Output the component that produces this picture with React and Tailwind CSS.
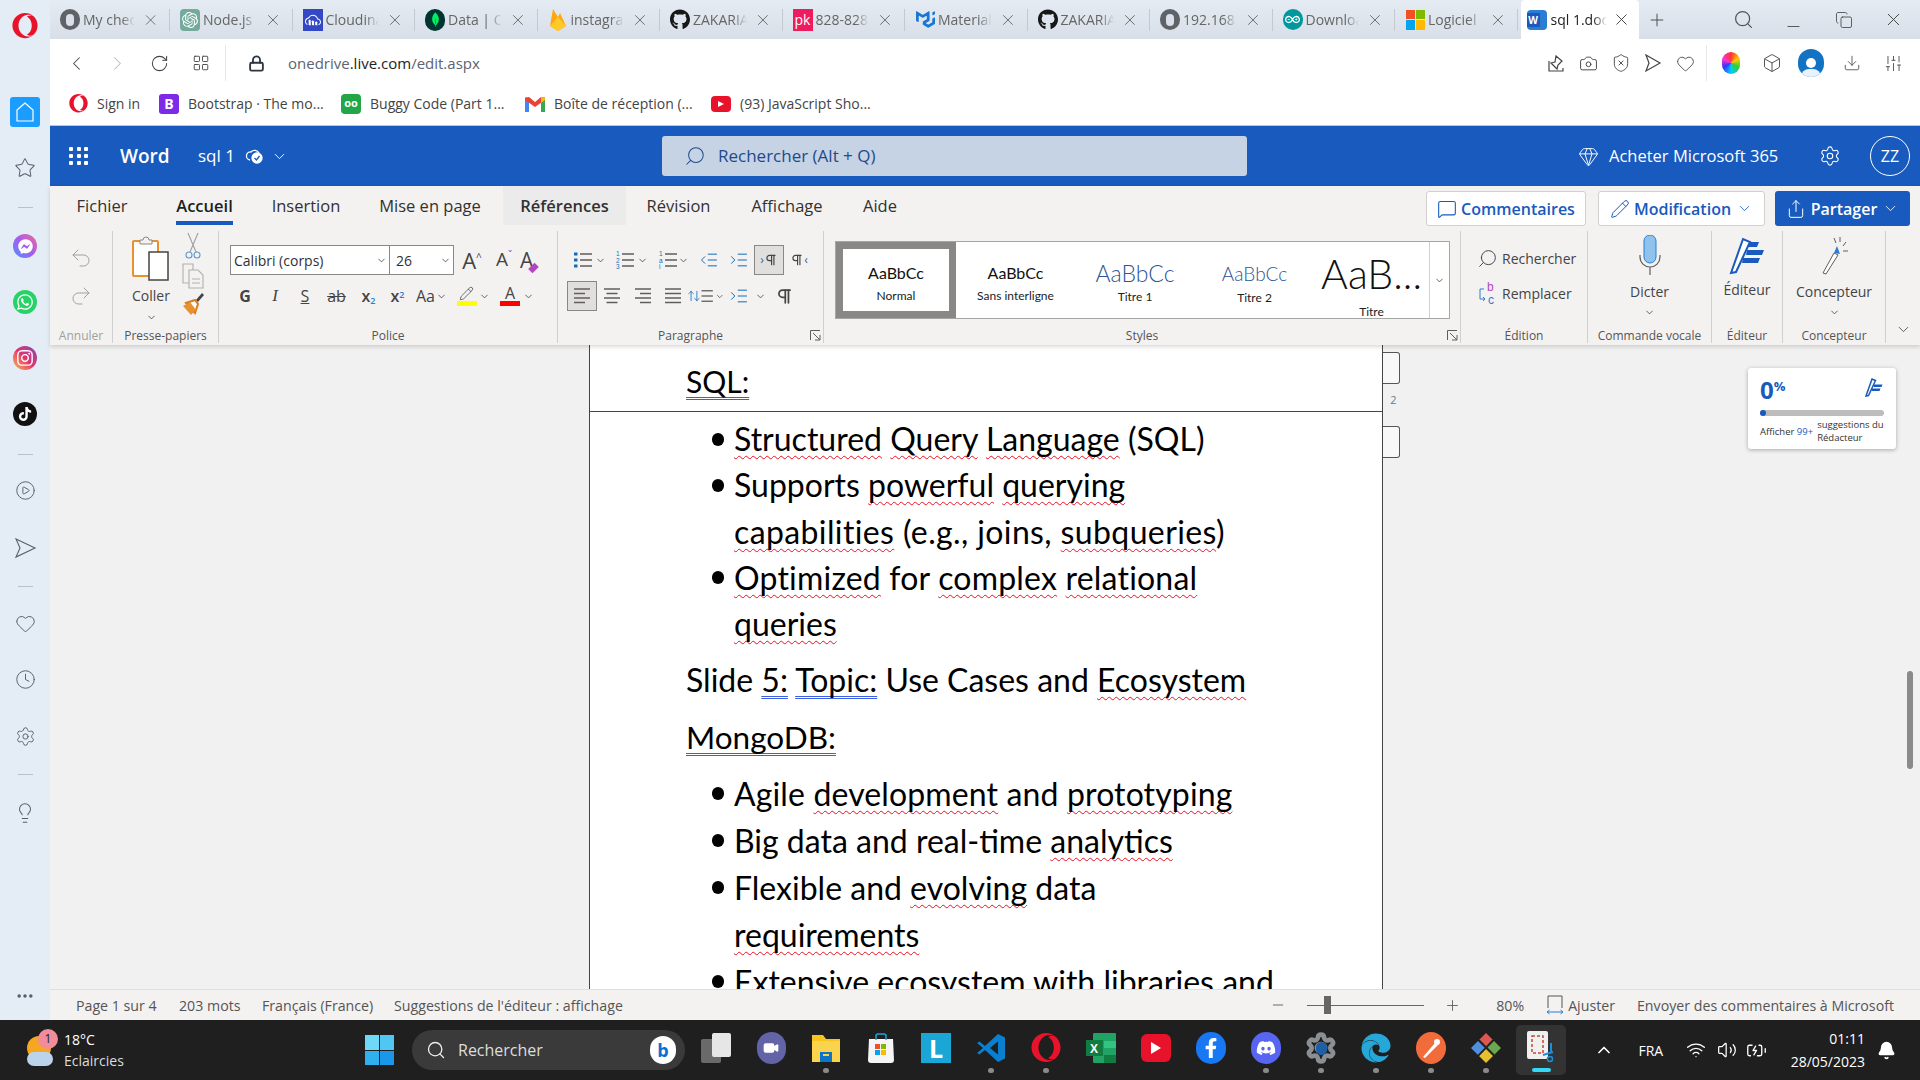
import {
  Bell, BatteryCharging, Box, Camera, ChevronDown, ChevronLeft, ChevronRight, ChevronUp, CirclePlay, Clock,
  Download, Ellipsis, Gem, Heart, IndentDecrease, IndentIncrease, Lightbulb, Lock, MessageSquare, Minus,
  Pencil, Pilcrow, Plus, Redo2, RotateCw, Search, Settings, Share, ShieldX, SlidersHorizontal, Star, Undo2,
  Video, Volume2, Wifi, X, LayoutGrid, ArrowUpDown, Copy as Restore,
} from "lucide-react";
import { FaDiscord, FaEdge, FaFacebookF, FaFacebookMessenger, FaGithub, FaInstagram, FaOpera, FaTiktok, FaWhatsapp } from "react-icons/fa";
import { SiArduino, SiCloudinary, SiMongodb, SiMui, SiOpenai } from "react-icons/si";

const Globe = () => (
  <span className="w-[20px] h-[21px] rounded-full bg-[#5f6368] flex items-center justify-center">
    <span className="w-[8px] h-[12px] rounded-full bg-[#d9e0e9]" />
  </span>
);

const Flame = () => (
  <svg width="18" height="24" viewBox="0 0 18 24"><path d="M1 18 4 1l5 8 2-4 6 13-8 5z" fill="#ffa611" /><path d="M1 18 9 9l8 9-8 5z" fill="#ffca28" /></svg>
);

const tabs = [
  { icon: <Globe />, title: "My check" },
  { icon: <span className="w-[20px] h-[22px] rounded-sm bg-[#74aa9c] flex items-center justify-center"><SiOpenai size={16} className="text-white" /></span>, title: "Node.js" },
  { icon: <span className="w-[20px] h-[22px] bg-[#3448c5] flex items-center justify-center"><SiCloudinary size={16} className="text-white" /></span>, title: "Cloudinary" },
  { icon: <span className="w-[20px] h-[22px] rounded-full bg-[#023430] flex items-center justify-center"><SiMongodb size={15} className="text-[#00ed64]" /></span>, title: "Data | Cl" },
  { icon: <Flame />, title: "instagram" },
  { icon: <FaGithub size={21} className="text-[#181717]" />, title: "ZAKARIA" },
  { icon: <span className="w-[20px] h-[22px] bg-[#ee1c5e] text-white text-[14px] leading-[22px] text-center">pk</span>, title: "828-828" },
  { icon: <SiMui size={19} className="text-[#1976d2]" />, title: "Material" },
  { icon: <FaGithub size={21} className="text-[#181717]" />, title: "ZAKARIA" },
  { icon: <Globe />, title: "192.168." },
  { icon: <span className="w-[20px] h-[21px] rounded-full bg-[#00979d] flex items-center justify-center"><SiArduino size={15} className="text-white" /></span>, title: "Download" },
  { icon: <MsLogo />, title: "Logiciel" },
];

function MsLogo() {
  return (
    <span className="w-[19px] h-[20px] grid grid-cols-2 gap-px">
      <span className="bg-[#f25022]" /><span className="bg-[#7fba00]" />
      <span className="bg-[#00a4ef]" /><span className="bg-[#ffb900]" />
    </span>
  );
}

function WordIcon() {
  return (
    <span className="w-[20px] h-[20px] bg-[#2b7cd3] flex items-center rounded-sm">
      <span className="w-[13px] h-[14px] bg-[#185abd] text-white text-[10px] font-bold leading-[14px] text-center">W</span>
    </span>
  );
}

function Tab({ icon, title, wide }) {
  return (
    <div className={`${wide ? "w-[120px]" : "w-[122.5px]"} h-[39px] flex items-center pl-[10px] shrink-0`}>
      <span className="w-[20px] flex items-center justify-center shrink-0">{icon}</span>
      <span className="w-[54px] ml-[3px] overflow-hidden whitespace-nowrap text-[14px] text-[#666] [mask-image:linear-gradient(90deg,#000_75%,transparent)]">{title}</span>
      <X size={18} strokeWidth={1.1} className="ml-[7px] text-[#555]" />
      <span className="ml-[10px] w-px h-[22px] bg-[#c3c9d1]" />
    </div>
  );
}

function TopStrip() {
  return (
    <div className="h-[39px] flex items-center bg-linear-to-b from-[#e4ebf3] to-[#d8dfe8]">
      {tabs.map((t, i) => <Tab key={i} icon={t.icon} title={t.title} wide={i === 0} />)}
      <div className="w-[118px] ml-[3px] h-[39px] bg-white rounded-t flex items-center pl-[6px] shrink-0">
        <WordIcon />
        <span className="w-[56px] ml-[4px] overflow-hidden whitespace-nowrap text-[14px] text-[#222] [mask-image:linear-gradient(90deg,#000_75%,transparent)]">sql 1.docx</span>
        <X size={19} strokeWidth={1.1} className="ml-[5px] text-[#333]" />
      </div>
      <Plus size={20} strokeWidth={1.1} className="ml-[8px] text-[#444]" />
      <Search size={21} strokeWidth={1.4} className="ml-[66px] text-[#555]" />
      <Minus size={19} strokeWidth={1.1} className="ml-[30px] mt-[14px] text-[#444]" />
      <Restore size={18} strokeWidth={1.1} className="ml-[32px] text-[#444]" />
      <X size={21} strokeWidth={1.1} className="ml-[30px] text-[#444]" />
    </div>
  );
}

function AddressBar() {
  return (
    <div className="h-[43px] bg-white flex items-center pl-[6px] pr-[6px] pt-[5px]">
      <span className="w-[41px] flex justify-center"><ChevronLeft size={23} strokeWidth={1.1} className="text-[#444]" /></span>
      <span className="w-[41px] flex justify-center"><ChevronRight size={23} strokeWidth={1.1} className="text-[#bbb]" /></span>
      <span className="w-[42px] flex justify-center"><RotateCw size={19} strokeWidth={1.3} className="text-[#444]" /></span>
      <span className="w-[42px] flex justify-center"><LayoutGrid size={18} strokeWidth={1.2} className="text-[#444]" /></span>
      <span className="ml-[3px] w-px h-[36px] bg-[#e8e8e8]" />
      <Lock size={17} strokeWidth={2.6} className="ml-[22px] text-[#2f3640]" />
      <span className="ml-[23px] text-[15px] text-[#5c6470]">onedrive<span className="text-[#222]">.live.com</span>/edit.aspx</span>
      <div className="ml-auto flex items-center text-[#444]">
        <span className="w-[32.5px] flex justify-center">
          <svg width="18" height="20" viewBox="0 0 18 20" fill="none" stroke="currentColor" strokeWidth="1.2"><path d="M2 8v10h14v-3M9 3l6 5-4 4-1 4-6-6 4-1z" /></svg>
        </span>
        <span className="w-[32.5px] flex justify-center"><Camera size={19} strokeWidth={1.2} /></span>
        <span className="w-[32.5px] flex justify-center"><ShieldX size={20} strokeWidth={1.1} /></span>
        <span className="w-[32.5px] flex justify-center">
          <svg width="18" height="20" viewBox="0 0 18 20" fill="none" stroke="currentColor" strokeWidth="1.2"><path d="M2 2 16 10 2 18 5 10z" /></svg>
        </span>
        <span className="w-[32.5px] flex justify-center"><Heart size={19} strokeWidth={1.1} /></span>
        <span className="ml-[4px] w-px h-[36px] bg-[#e8e8e8]" />
        <span className="w-[47px] flex justify-center">
          <span className="w-[18px] h-[22px] rounded-full bg-[conic-gradient(#f33,#fc0,#3c3,#0cf,#33f,#f3c,#f33)]" />
        </span>
        <span className="w-[36px] flex justify-center"><Box size={20} strokeWidth={1.1} /></span>
        <span className="w-[42px] flex justify-center">
          <span className="w-[26px] h-[28px] rounded-full bg-[#1273c4] flex flex-col items-center justify-end overflow-hidden">
            <span className="w-[10px] h-[10px] rounded-full bg-white mb-[1px]" />
            <span className="w-[20px] h-[8px] rounded-t-full bg-[#e8f2fb]" />
          </span>
        </span>
        <span className="w-[40px] flex justify-center"><Download size={18} strokeWidth={1.1} /></span>
        <span className="w-[42px] flex justify-center"><SlidersHorizontal size={19} strokeWidth={1.1} className="rotate-90" /></span>
      </div>
    </div>
  );
}

const marks = [
  { w: "w-[91px]", icon: <FaOpera size={19} className="text-[#e8132b]" />, label: "Sign in" },
  { w: "w-[182px]", icon: <span className="w-[20px] h-[20px] rounded-[3px] bg-[#7c2ae8] text-white font-bold text-[14px] leading-[20px] text-center">B</span>, label: "Bootstrap · The mo..." },
  { w: "w-[184px]", icon: <span className="w-[20px] h-[20px] bg-[#22a648] rounded-sm flex items-center justify-center text-white text-[11px] font-bold">oo</span>, label: "Buggy Code (Part 1..." },
  { w: "w-[186px]", icon: <GmailMark />, label: "Boîte de réception (..." },
  { w: "w-[170px]", icon: <span className="w-[20px] h-[16px] rounded-[4px] bg-[#e8132b] flex items-center justify-center"><span className="w-0 h-0 border-y-[3.5px] border-y-transparent border-l-[6px] border-l-white" /></span>, label: "(93) JavaScript Sho..." },
];

function GmailMark() {
  return (
    <svg width="20" height="16" viewBox="0 0 20 16">
      <path d="M0 2v14h4V6z" fill="#4285f4" /><path d="M20 2v14h-4V6z" fill="#34a853" />
      <path d="M0 1.5 4 1l6 5 6-5 4 .5V4l-10 7L0 4z" fill="#ea4335" /><path d="M16 1l4 .5V4l-4 3z" fill="#fbbc04" />
    </svg>
  );
}

function Bookmarks() {
  return (
    <div className="h-[44px] bg-white flex items-center pl-[18px] border-b border-[#c4c4c4]">
      {marks.map((m) => (
        <div key={m.label} className={`${m.w} flex items-center shrink-0`}>
          <span className="w-[20px] flex justify-center shrink-0">{m.icon}</span>
          <span className="ml-[9px] text-[14px] text-[#444] whitespace-nowrap">{m.label}</span>
        </div>
      ))}
    </div>
  );
}

function WordBar() {
  return (
    <div className="h-[60px] bg-[#185abd] flex items-center pl-[19px] pr-[10px] text-white">
      <span className="w-[20px] grid grid-cols-3 gap-[3px]">
        {[1, 2, 3, 4, 5, 6, 7, 8, 9].map((d) => <span key={d} className="w-[4px] h-[4px] rounded-[1px] bg-white" />)}
      </span>
      <span className="ml-[31px] w-[78px] text-[19px] font-semibold">Word</span>
      <span className="w-[47px] text-[17px]">sql 1</span>
      <svg width="20" height="20" viewBox="0 0 20 20" fill="none" stroke="white" strokeWidth="1.3"><path d="M5 14a4 4 0 0 1 1-8 5 5 0 0 1 8 1" /><circle cx="12" cy="12" r="5" fill="white" /><path d="m9.500 12 2 2 3-4" stroke="#185abd" /></svg>
      <ChevronDown size={17} strokeWidth={1.3} className="ml-[6px]" />
      <div className="ml-[374px] w-[585px] h-[40px] rounded-[3px] bg-[#c6d3e5] flex items-center pl-[22px]">
        <Search size={22} strokeWidth={1.1} className="text-[#1f4a8a] -scale-x-100" />
        <span className="ml-[12px] text-[17px] text-[#1f4a8a]">Rechercher (Alt + Q)</span>
      </div>
      <div className="ml-auto flex items-center">
        <Gem size={21} strokeWidth={1.1} />
        <span className="ml-[10px] w-[171px] text-[16.5px] whitespace-nowrap">Acheter Microsoft 365</span>
        <Settings size={22} strokeWidth={1.2} className="ml-[39px]" />
        <span className="ml-[29px] w-[40px] h-[40px] rounded-full border border-white flex items-center justify-center text-[16px]">ZZ</span>
      </div>
    </div>
  );
}

const ribbonTabs = [
  { w: "w-[104px]", label: "Fichier" },
  { w: "w-[101px]", label: "Accueil", on: true },
  { w: "w-[102px]", label: "Insertion" },
  { w: "w-[146px]", label: "Mise en page" },
  { w: "w-[123px]", label: "Références", hover: true },
  { w: "w-[105px]", label: "Révision" },
  { w: "w-[112px]", label: "Affichage" },
  { w: "w-[74px]", label: "Aide" },
];

function RibbonTabs() {
  return (
    <div className="h-[39px] flex pr-[10px]">
      {ribbonTabs.map((t) => (
        <div key={t.label} className={`${t.w} h-[39px] flex justify-center text-[16.5px] text-[#323130] ${t.hover ? "bg-[#ebebeb] font-semibold" : ""}`}>
          <span className={`h-[39px] leading-[39px] ${t.on ? "font-semibold border-b-4 border-[#185abd] text-[#201f1e]" : ""}`}>{t.label}</span>
        </div>
      ))}
      <div className="ml-auto flex items-start pt-[5px] text-[16px] font-semibold">
        <div className="w-[160px] h-[35px] bg-white border border-[#d2d0ce] rounded-[3px] flex items-center justify-center text-[#185abd]">
          <MessageSquare size={20} strokeWidth={1.3} className="mr-[4px]" />Commentaires
        </div>
        <div className="ml-[12px] w-[167px] h-[35px] bg-white border border-[#d2d0ce] rounded-[3px] flex items-center justify-center text-[#185abd]">
          <Pencil size={20} strokeWidth={1.2} className="mr-[4px]" />Modification<ChevronDown size={17} strokeWidth={1.2} className="ml-[5px]" />
        </div>
        <div className="ml-[10px] w-[135px] h-[35px] bg-[#185abd] rounded-[3px] flex items-center justify-center text-white">
          <Share size={20} strokeWidth={1.2} className="mr-[5px]" />Partager<ChevronDown size={17} strokeWidth={1.2} className="ml-[5px]" />
        </div>
      </div>
    </div>
  );
}

function Group({ w, label, muted, launcher, children }) {
  return (
    <div className={`${w} h-[112px] shrink-0 flex flex-col border-r border-[#d2d0ce]`}>
      <div className="h-[98px]">{children}</div>
      <div className={`h-[14px] leading-[14px] flex text-[12px] ${muted ? "text-[#a19f9d]" : "text-[#555]"} ${launcher ? "pl-[13px]" : ""}`}>
        <span className="flex-1 text-center whitespace-nowrap">{label}</span>
        {launcher && (
          <svg width="11" height="11" viewBox="0 0 11 11" fill="none" stroke="#605e5c" className="mr-[2px] mt-[1px]"><path d="M.5 10V.5H10M3 3l7 7M10 5v5H5" /></svg>
        )}
      </div>
    </div>
  );
}

const Chev = ({ className = "" }) => <ChevronDown size={11} strokeWidth={1.8} className={`text-[#444] ${className}`} />;

function Lines({ rows, color = "#605e5c" }) {
  // small stack of lines with a given left offset and width, for the list and alignment icons
  return (
    <svg width="20" height="20" viewBox="0 0 20 20" stroke={color} strokeWidth="1.5">
      {rows.map((r, i) => <path key={i} d={`M${r[0]} ${r[2]}h${r[1]}`} />)}
    </svg>
  );
}

const Cell = ({ w, on, children }) => (
  <span className={`${w} h-[30px] flex items-center justify-center shrink-0 ${on ? "bg-[#e1dfdd] border border-[#8a8886]" : ""}`}>{children}</span>
);

function ListDots({ kind }) {
  return (
    <svg width="20" height="20" viewBox="0 0 20 20">
      <g stroke="#605e5c" strokeWidth="1.5"><path d="M7 4h12M7 10h12M7 16h12" /></g>
      {kind === "dot" ? (
        <g fill="#0f6cbd"><rect x="1" y="2.500" width="3.500" height="3" /><rect x="1" y="8.500" width="3.500" height="3" /><rect x="1" y="14.500" width="3.500" height="3" /></g>
      ) : (
        <g fill="#0f6cbd" fontSize="6.500" fontFamily="Liberation Sans, sans-serif"><text x="1" y="6">1</text><text x="1" y="12.500">{kind === "num" ? "2" : "a"}</text><text x="1" y="19">{kind === "num" ? "3" : "i"}</text></g>
      )}
    </svg>
  );
}

function PoliceGroup() {
  return (
    <div className="pl-[11px] pt-[14px]">
      <div className="flex items-center h-[30px]">
        <div className="w-[224px] h-[30px] bg-white border border-[#8a8886] flex text-[14px] text-[#323130]">
          <div className="w-[159px] flex items-center pl-[3px] border-r border-[#8a8886]">Calibri (corps)<Chev className="ml-auto mr-[2px]" /></div>
          <div className="flex-1 flex items-center pl-[6px]">26<Chev className="ml-auto mr-[2px]" /></div>
        </div>
        <span className="ml-[2px] w-[32px] text-[22px] text-[#444] text-center leading-none">A<span className="text-[10px] align-super text-[#444]">^</span></span>
        <span className="w-[32px] text-[19px] text-[#444] text-center leading-none">A<span className="text-[10px] align-super text-[#2b7cd3]">ˇ</span></span>
        <span className="w-[26px] text-[21px] text-[#444] leading-none flex items-end">A<span className="w-[9px] h-[6px] -ml-[4px] -rotate-45 bg-[#b146c2]" /></span>
      </div>
      <div className="flex items-center h-[36px] mt-[3px] text-[#444] text-[16px]">
        <Cell w="w-[30px]"><b>G</b></Cell>
        <Cell w="w-[30px]"><i className="font-['Liberation_Serif',serif] text-[17px]">I</i></Cell>
        <Cell w="w-[30px]"><u>S</u></Cell>
        <Cell w="w-[33px]"><s>ab</s></Cell>
        <Cell w="w-[31px]"><span className="font-semibold">x<sub className="text-[9px] text-[#2b7cd3]">2</sub></span></Cell>
        <Cell w="w-[27px]"><span className="font-semibold">x<sup className="text-[9px] text-[#2b7cd3]">2</sup></span></Cell>
        <Cell w="w-[41px]"><span className="whitespace-nowrap">Aa</span><Chev className="ml-[1px]" /></Cell>
        <Cell w="w-[42px]">
          <span className="flex flex-col items-center"><Pencil size={15} strokeWidth={1.2} /><span className="w-[20px] h-[5px] bg-[#ffff00]" /></span><Chev className="ml-[2px]" />
        </Cell>
        <Cell w="w-[46px]">
          <span className="flex flex-col items-center leading-[15px]">A<span className="w-[20px] h-[5px] bg-[#ff0000]" /></span><Chev className="ml-[3px]" />
        </Cell>
      </div>
    </div>
  );
}

function ParaGroup() {
  return (
    <div className="pl-[9px] pt-[14px]">
      <div className="flex items-center h-[30px] pl-[2px]">
        <Cell w="w-[40px]"><ListDots kind="dot" /><Chev className="ml-[2px]" /></Cell>
        <Cell w="w-[44px]"><ListDots kind="num" /><Chev className="ml-[2px]" /></Cell>
        <Cell w="w-[41px]"><ListDots kind="abc" /><Chev /></Cell>
        <Cell w="w-[29px]"><IndentDecrease size={20} strokeWidth={1.2} className="text-[#0f6cbd]" /></Cell>
        <Cell w="w-[31px]"><IndentIncrease size={20} strokeWidth={1.2} className="text-[#0f6cbd]" /></Cell>
        <Cell w="w-[30px]" on><span className="text-[#0f6cbd] text-[12px]">›</span><Pilcrow size={14} strokeWidth={2} className="text-[#444]" /></Cell>
        <Cell w="w-[30px]"><Pilcrow size={14} strokeWidth={2} className="text-[#444]" /><span className="text-[#0f6cbd] text-[12px]">‹</span></Cell>
      </div>
      <div className="flex items-center h-[36px] mt-[3px]">
        <Cell w="w-[30px]" on><Lines rows={[[2, 16, 3], [2, 11, 7.500], [2, 16, 12], [2, 11, 16.500]]} /></Cell>
        <Cell w="w-[30px]"><Lines rows={[[2, 16, 3], [4.500, 11, 7.500], [2, 16, 12], [4.500, 11, 16.500]]} /></Cell>
        <Cell w="w-[31px]"><Lines rows={[[2, 16, 3], [7, 11, 7.500], [2, 16, 12], [7, 11, 16.500]]} /></Cell>
        <Cell w="w-[29px]"><Lines rows={[[2, 16, 3], [2, 16, 7.500], [2, 16, 12], [2, 16, 16.500]]} /></Cell>
        <Cell w="w-[38px]"><ArrowUpDown size={16} strokeWidth={1.4} className="text-[#0f6cbd] -mr-[3px]" /><Lines rows={[[4, 13, 4], [4, 13, 10], [4, 13, 16]]} /><Chev /></Cell>
        <Cell w="w-[44px]"><IndentIncrease size={20} strokeWidth={1.2} className="text-[#0f6cbd]" /><Chev className="ml-[6px]" /></Cell>
        <Cell w="w-[30px]"><Pilcrow size={19} strokeWidth={2.2} className="text-[#444]" /></Cell>
      </div>
    </div>
  );
}

function StyleItem({ w, sample, name, nameClass = "mt-[3px]", on }) {
  return (
    <div className={`${w} h-full shrink-0 flex flex-col items-center overflow-hidden ${on ? "border-[7px] border-[#8a8886] pt-[13px]" : "pt-[20px]"}`}>
      {sample}
      <span className={`text-[12px] text-[#222] whitespace-nowrap ${nameClass}`}>{name}</span>
    </div>
  );
}

function StylesGroup() {
  return (
    <div className="pl-[11px] pt-[10px]">
      <div className="w-[615px] h-[78px] bg-white border border-[#a6a6a6] flex font-['Lato',sans-serif]">
        <StyleItem w="w-[120px]" on name="Normal" sample={<span className="text-[16px] text-[#111] leading-[22px]">AaBbCc</span>} />
        <StyleItem w="w-[119px]" name="Sans interligne" sample={<span className="text-[16px] text-[#111] leading-[22px]">AaBbCc</span>} />
        <StyleItem w="w-[120px]" name="Titre 1" nameClass="mt-[2px]" sample={<span className="text-[23px] font-light text-[#2f5496] leading-[26px] -mt-[2px]">AaBbCc</span>} />
        <StyleItem w="w-[119px]" name="Titre 2" sample={<span className="text-[19px] font-light text-[#2f5496] leading-[24px]">AaBbCc</span>} />
        <div className="w-[115px] shrink-0 flex flex-col items-center overflow-hidden">
          <span className="text-[41px] font-light text-[#111] leading-[56px] mt-[4px] whitespace-nowrap">AaB...</span>
          <span className="text-[12px] text-[#222] mt-[1px]">Titre</span>
        </div>
        <div className="flex-1 flex items-center justify-center border-l border-[#d2d0ce]"><Chev /></div>
      </div>
    </div>
  );
}

function BigButton({ label, icon, chevron, labelClass = "mt-[5px]" }) {
  return (
    <div className="flex flex-col items-center pt-[3px]">
      <div className="h-[42px] flex items-center justify-center">{icon}</div>
      <span className={`text-[14px] text-[#444] ${labelClass}`}>{label}</span>
      {chevron && <Chev className="mt-[5px]" />}
    </div>
  );
}

const PasteIcon = () => (
  <svg width="38" height="46" viewBox="0 0 38 46" fill="none">
    <rect x="1" y="6" width="25" height="35" rx="1" fill="#fff" stroke="#e8912d" strokeWidth="2" />
    <path d="M8 9V5h3a3 3 0 0 1 6 0h3v4z" fill="#f3f2f1" stroke="#8a8886" />
    <rect x="17" y="17" width="19" height="28" fill="#fff" stroke="#444" strokeWidth="1.500" />
  </svg>
);

const ScissorsIcon = () => (
  <svg width="16" height="28" viewBox="0 0 16 28" fill="none" strokeWidth="1.100">
    <path d="M3 1 11 20M13 1 5 20" stroke="#a19f9d" />
    <circle cx="4" cy="23" r="3" stroke="#5b9bd5" /><circle cx="12" cy="23" r="3" stroke="#5b9bd5" />
  </svg>
);

const CopyIcon = () => (
  <svg width="22" height="26" viewBox="0 0 22 26" fill="#f3f2f1" stroke="#b0b0b0" strokeWidth="1.100">
    <path d="M1 1h10v19H1z" /><path d="M7 7h9l5 5v13H7z" /><path d="M10 16h8M10 20h8" />
  </svg>
);

const PainterIcon = () => (
  <svg width="22" height="24" viewBox="0 0 22 24" fill="none">
    <path d="M14 8 20 1l2 2-6 7z" fill="#444" /><path d="M4 11l9-3 3 4-3 9z" fill="#fff" stroke="#d97a1c" strokeWidth="2" /><path d="M1 14l7-4 6 8-5 5z" fill="#e8912d" />
  </svg>
);

const ReplaceIcon = () => (
  <svg width="20" height="24" viewBox="0 0 20 24" fill="none">
    <text x="10" y="10" fill="#b146c2" fontSize="12" fontFamily="Liberation Sans, sans-serif">b</text>
    <text x="11" y="23" fill="#2b7cd3" fontSize="12" fontFamily="Liberation Sans, sans-serif">c</text>
    <path d="M7 8H3v10h5M6 16l2 2-2 2" stroke="#2b7cd3" />
  </svg>
);

function Ribbon() {
  return (
    <div className="h-[159px] bg-[#f3f2f1] shadow-[0_2px_4px_rgba(0,0,0,0.15)] relative z-10">
      <RibbonTabs />
      <div className="flex pt-[6px]">
        <Group w="w-[63px]" label="Annuler" muted>
          <div className="flex flex-col items-center pt-[15px] text-[#a19f9d]">
            <Undo2 size={24} strokeWidth={1} /><Redo2 size={24} strokeWidth={1} className="mt-[14px]" />
          </div>
        </Group>
        <Group w="w-[106px]" label="Presse-papiers">
          <div className="flex pl-[19px]">
            <div className="w-[38px] flex flex-col items-center">
              <div className="h-[48px] mt-[3px] flex items-center justify-center"><PasteIcon /></div>
              <span className="text-[14px] text-[#444] mt-[3px]">Coller</span>
              <Chev className="mt-[6px]" />
            </div>
            <div className="ml-[10px] w-[26px] flex flex-col items-center pt-[1px]">
              <ScissorsIcon />
              <span className="mt-[3px]"><CopyIcon /></span>
              <span className="mt-[3px]"><PainterIcon /></span>
            </div>
          </div>
        </Group>
        <Group w="w-[339px]" label="Police"><PoliceGroup /></Group>
        <Group w="w-[266px]" label="Paragraphe" launcher><ParaGroup /></Group>
        <Group w="w-[637px]" label="Styles" launcher><StylesGroup /></Group>
        <Group w="w-[127px]" label="Édition">
          <div className="pl-[16px] pt-[15px] text-[14px] text-[#444]">
            <div className="flex items-center h-[24px]"><Search size={21} strokeWidth={1.1} className="-scale-x-100 mr-[4px]" />Rechercher</div>
            <div className="flex items-center h-[24px] mt-[11px]"><span className="mr-[5px]"><ReplaceIcon /></span>Remplacer</div>
          </div>
        </Group>
        <Group w="w-[124px]" label="Commande vocale">
          <BigButton label="Dicter" chevron icon={
            <svg width="24" height="40" viewBox="0 0 24 40" fill="none"><rect x="6" y="0" width="12" height="28" rx="6" fill="#8fc3ee" stroke="#2b7cd3" /><path d="M2 20v2a10 10 0 0 0 20 0v-2M12 32v8" stroke="#605e5c" strokeWidth="1.2" /></svg>
          } />
        </Group>
        <Group w="w-[71px]" label="Éditeur">
          <BigButton label="Éditeur" labelClass="mt-[3px]" icon={
            <svg width="40" height="40" viewBox="0 0 40 40" fill="none"><path d="M4 38 16 4l7 3L9 37z" fill="#fff" stroke="#185abd" strokeWidth="2" /><path d="M20 15h17l-2 5H19zM16 23h17l-2 5H15z" fill="#185abd" /><path d="M23 7h9l-2 5h-9z" fill="#185abd" /></svg>
          } />
        </Group>
        <Group w="w-[103px]" label="Concepteur">
          <BigButton label="Concepteur" chevron icon={
            <svg width="32" height="40" viewBox="0 0 32 40" fill="none"><path d="M5 38 16 18l4 2L8 39z" fill="#fff" stroke="#605e5c" /><path d="M16 18l3-7 3 8z" fill="#2b7cd3" /><path d="M22 2v5M28 7l-3 4M30 16h-5M16 3l2 5" stroke="#605e5c" /></svg>
          } />
        </Group>
        <div className="flex-1 flex items-end justify-center pb-[5px]"><ChevronDown size={17} strokeWidth={1.2} className="text-[#444]" /></div>
      </div>
    </div>
  );
}

const Wavy = ({ children }) => (
  <span className="underline decoration-wavy decoration-[#e81123] decoration-1 underline-offset-[4px] [text-decoration-skip-ink:none]">{children}</span>
);
const Blue = ({ children }) => (
  <span className="underline decoration-double decoration-[#3b5fe0] decoration-1 underline-offset-[4px] [text-decoration-skip-ink:none]">{children}</span>
);

function Bullet({ children }) {
  return (
    <div className="flex pl-[122px]">
      <div className="w-[22px] h-[46.25px] shrink-0 flex items-center"><span className="w-[12px] h-[13px] rounded-full bg-black" /></div>
      <div className="leading-[46.25px] whitespace-nowrap">{children}</div>
    </div>
  );
}

function Bullet2({ children }) {
  return (
    <div className="flex pl-[122px]">
      <div className="w-[22px] h-[47px] shrink-0 flex items-center"><span className="w-[12px] h-[13px] rounded-full bg-black" /></div>
      <div className="leading-[47px] whitespace-nowrap">{children}</div>
    </div>
  );
}

function Page() {
  return (
    <div className="w-[794px] h-[644px] shrink-0 bg-white border-x border-[#444] overflow-hidden font-['Lato',sans-serif] text-[32px] text-black">
      <div className="h-[67px] border-b border-[#444] pl-[96px] pt-[13px] leading-[46px] text-[30px]"><Blue>SQL:</Blue></div>
      <div className="pt-[4px]">
        <Bullet><Wavy>Structured</Wavy> <Wavy>Query</Wavy> <Wavy>Language</Wavy> (SQL)</Bullet>
        <Bullet>Supports <Wavy>powerful</Wavy> <Wavy>querying</Wavy><br /><span className="tracking-[0.38px]"><Wavy>capabilities</Wavy> (e.g., joins, <Wavy>subqueries</Wavy>)</span></Bullet>
        <Bullet><span className="tracking-[0.2px]"><Wavy>Optimized</Wavy> for <Wavy>complex</Wavy> <Wavy>relational</Wavy></span><br /><Wavy>queries</Wavy></Bullet>
        <div className="pl-[96px] leading-[46.25px] mt-[10px]">Slide <Blue>5:</Blue> <Blue>Topic:</Blue> Use Cases and <Wavy>Ecosystem</Wavy></div>
        <div className="pl-[96px] leading-[46.25px] mt-[10px] text-[31.5px]"><Blue>MongoDB:</Blue></div>
        <div className="mt-[10px]">
          <Bullet2><span className="tracking-[0.13px]">Agile <Wavy>development</Wavy> and <Wavy>prototyping</Wavy></span></Bullet2>
          <Bullet2>Big data and real-time <Wavy>analytics</Wavy></Bullet2>
          <Bullet2>Flexible and <Wavy>evolving</Wavy> data<br /><Wavy>requirements</Wavy></Bullet2>
          <Bullet2>Extensive <Wavy>ecosystem</Wavy> with <Wavy>libraries</Wavy> and</Bullet2>
        </div>
      </div>
    </div>
  );
}

function EditorCard() {
  return (
    <div className="w-[148px] h-[81px] mt-[23px] bg-white rounded-[3px] shadow-[0_1px_4px_rgba(0,0,0,0.3)] px-[12px] pt-[8px]">
      <div className="flex items-start justify-between">
        <span className="text-[#185abd] font-bold text-[24px] leading-[28px]">0<span className="text-[13px] align-top leading-[20px]">%</span></span>
        <svg width="20" height="20" viewBox="0 0 40 40" fill="none" className="mt-[1px]"><path d="M4 38 16 4l7 3L9 37z" fill="#fff" stroke="#185abd" strokeWidth="3" /><path d="M20 15h17l-2 5H19zM16 23h17l-2 5H15z" fill="#185abd" /></svg>
      </div>
      <div className="h-[6px] rounded-full bg-[#bdbdbd] mt-[6px] flex"><span className="w-[6px] h-[6px] rounded-full bg-[#185abd]" /></div>
      <div className="flex items-center text-[9.500px] text-[#333] leading-[13px] mt-[2px] whitespace-nowrap">
        <span>Afficher <span className="text-[#185abd]">99+</span></span>
        <span className="ml-[4px]">suggestions du<br />Rédacteur</span>
      </div>
    </div>
  );
}

function DocArea() {
  return (
    <div className="flex-1 min-h-0 flex bg-[#f1f1f1] pl-[539px] overflow-hidden">
      <Page />
      <div className="w-[17px] shrink-0 pt-[7px] flex flex-col text-[#777]">
        <div className="h-[32px] border border-l-0 border-[#555] rounded-r-[3px] bg-[#f8f8f8]" />
        <div className="h-[42px] leading-[32px] text-[11px] text-center pl-[4px]">2</div>
        <div className="h-[32px] border border-l-0 border-[#555] rounded-r-[3px] bg-[#f8f8f8]" />
      </div>
      <div className="ml-[348px] shrink-0"><EditorCard /></div>
      <div className="ml-[11px] w-[6px] h-[98px] mt-[326px] rounded-full bg-[#8a8a8a]" />
    </div>
  );
}

const FitIcon = () => (
  <svg width="18" height="20" viewBox="0 0 18 20" fill="none">
    <path d="M2 13V1h14v12" stroke="#555" /><path d="M1 17h16M1 17l2.500-2M1 17l2.500 2M17 17l-2.500-2M17 17l-2.500 2" stroke="#2b7cd3" />
  </svg>
);

function StatusBar() {
  return (
    <div className="h-[31px] bg-[#f3f2f1] border-t border-[#e1dfdd] flex items-center pl-[26px] pr-[26px] pt-[1px] text-[14.2px] text-[#555] whitespace-nowrap">
      <span className="w-[103px]">Page 1 sur 4</span>
      <span className="w-[83px]">203 mots</span>
      <span className="w-[132px]">Français (France)</span>
      <span>Suggestions de l'éditeur : affichage</span>
      <div className="ml-auto flex items-center">
        <Minus size={16} strokeWidth={1.3} className="mr-[21px]" />
        <span className="w-[117px] h-[1px] bg-[#666] flex items-center pl-[17px]"><span className="w-[7px] h-[18px] bg-[#666]" /></span>
        <Plus size={17} strokeWidth={1.2} className="ml-[20px]" />
        <span className="ml-[35px]">80%</span>
        <span className="ml-[22px]"><FitIcon /></span>
        <span className="ml-[4px]">Ajuster</span>
        <span className="ml-[22px]">Envoyer des commentaires à Microsoft</span>
      </div>
    </div>
  );
}

function Sidebar() {
  const line = "w-[15px] h-px bg-[#b8c2cd]";
  return (
    <div className="w-[50px] shrink-0 bg-[#e4ecf5] flex flex-col items-center text-[#555f6b]">
      <div className="h-[39px] pt-[14px] flex justify-center"><FaOpera size={26} className="text-[#e8132b] -mt-[1px]" /></div>
      <div className="mt-[58px] w-[30px] h-[30px] rounded-[3px] bg-[#1a9dff] flex items-center justify-center">
        <svg width="20" height="22" viewBox="0 0 20 22" fill="none" stroke="white" strokeWidth="1.2"><path d="M2 9 10 2l8 7v11H2z" /></svg>
      </div>
      <Star size={22} strokeWidth={1.1} className="mt-[30px]" />
      <span className={`${line} mt-[28px]`} />
      <span className="mt-[26px] w-[24px] h-[24px] rounded-full bg-linear-to-tr from-[#2f8cff] via-[#a45cf0] to-[#f85d8e] flex items-center justify-center"><FaFacebookMessenger size={15} className="text-white" /></span>
      <span className="mt-[32px] w-[24px] h-[24px] rounded-full bg-[#25d366] flex items-center justify-center"><FaWhatsapp size={18} className="text-white" /></span>
      <span className="mt-[32px] w-[24px] h-[24px] rounded-full bg-linear-to-tr from-[#fcb045] via-[#e1306c] to-[#833ab4] flex items-center justify-center"><FaInstagram size={18} className="text-white" /></span>
      <span className="mt-[32px] w-[24px] h-[24px] rounded-full bg-[#111] flex items-center justify-center"><FaTiktok size={14} className="text-white" /></span>
      <span className={`${line} mt-[28px]`} />
      <CirclePlay size={21} strokeWidth={1.1} className="mt-[25px]" />
      <svg width="23" height="22" viewBox="0 0 23 22" fill="none" stroke="currentColor" strokeWidth="1.1" className="mt-[36px]"><path d="M2 2 21 11 2 20 6 11z" /></svg>
      <span className={`${line} mt-[27px]`} />
      <Heart size={21} strokeWidth={1.1} className="mt-[26px]" />
      <Clock size={21} strokeWidth={1.1} className="mt-[35px]" />
      <Settings size={21} strokeWidth={1.1} className="mt-[36px]" />
      <span className={`${line} mt-[27px]`} />
      <Lightbulb size={22} strokeWidth={1.1} className="mt-[27px]" />
      <Ellipsis size={20} strokeWidth={2.2} className="mt-[162px]" />
    </div>
  );
}

const VsCode = () => (
  <svg width="30" height="30" viewBox="0 0 30 30"><path d="M22 1 29 4.500v21L22 29 9 17l-5.500 4.500L1 20l6-5-6-5 2.500-1.500L9 13z" fill="#0a7fd0" /><path d="M22 8.500 14 15l8 6.500z" fill="#1f1f1f" /></svg>
);
const Explorer = () => (
  <svg width="30" height="30" viewBox="0 0 30 30"><path d="M1 2h11l3 4h14v23H1z" fill="#f7c31c" /><path d="M1 8h28v21H1z" fill="#fcd34d" /><path d="M9 19h12v10H9z" fill="#0f74c4" /><path d="M12 22h6" stroke="#fcd34d" strokeWidth="2" /></svg>
);
const Store = () => (
  <svg width="30" height="30" viewBox="0 0 30 30"><path d="M3 6h24l1 21a3 3 0 0 1-3 3H5a3 3 0 0 1-3-3z" fill="#f5f5f5" /><path d="M10 7V3a2 2 0 0 1 2-2h6a2 2 0 0 1 2 2v4" fill="none" stroke="#1aa7d6" strokeWidth="1.5" /><rect x="9" y="11" width="5" height="5" fill="#f25022" /><rect x="15" y="11" width="5" height="5" fill="#7fba00" /><rect x="9" y="17" width="5" height="5" fill="#00a4ef" /><rect x="15" y="17" width="5" height="5" fill="#ffb900" /></svg>
);
const Excel = () => (
  <svg width="30" height="30" viewBox="0 0 30 30"><rect x="7" width="23" height="30" rx="1" fill="#21a366" /><rect x="18" y="8" width="12" height="7" fill="#33c481" /><rect x="18" y="22" width="12" height="8" fill="#107c41" /><rect y="7" width="17" height="16" fill="#107c41" /><text x="4" y="20" fill="white" fontSize="12" fontWeight="700" fontFamily="Liberation Sans, sans-serif">X</text></svg>
);
const Gear = () => (
  <span className="relative flex items-center justify-center">
    <Settings size={32} strokeWidth={3.500} className="text-[#8b8f94]" />
    <span className="absolute w-[11px] h-[13px] rounded-full bg-[#1d5fa6]" />
  </span>
);
const GitLogo = () => (
  <svg width="30" height="30" viewBox="0 0 30 30"><path d="M15 0 22 7 15 14 8 7z" fill="#e0574f" /><path d="M0 15 7 8l7 7-7 7z" fill="#4f8fe0" /><path d="M30 15 23 8l-7 7 7 7z" fill="#6aa84f" /><path d="M15 30 8 23l7-7 7 7z" fill="#e6c02f" /><path d="M8 7 23 22M22 7 7 23" stroke="#222" strokeWidth="1.500" /></svg>
);
const Snip = () => (
  <svg width="32" height="34" viewBox="0 0 32 34"><rect x="2" y="0" width="21" height="28" rx="2" fill="#f0f0f0" /><rect x="7" y="5" width="11" height="17" fill="none" stroke="#c8482e" strokeWidth="1.500" strokeDasharray="3 2" /><path d="M26 12v10M18 24l10-3" stroke="#1a8fe0" strokeWidth="2" /><circle cx="25" cy="28" r="2.500" fill="none" stroke="#1a8fe0" strokeWidth="1.500" /></svg>
);
const Postman = () => (
  <svg width="30" height="32" viewBox="0 0 30 32"><ellipse cx="15" cy="16" rx="15" ry="16" fill="#f26b3a" /><path d="M7 25 19 11l3 2L9 26z" fill="#fff" /><circle cx="21" cy="10" r="3" fill="#fff" /></svg>
);

const taskApps = [
  { id: "tv", icon: <span className="flex items-center justify-center w-[30px] h-[30px]"><span className="w-[20px] h-[24px] -mr-[9px] mt-[5px] bg-[#6a6a6a] rounded-[2px]" /><span className="w-[20px] h-[24px] -mt-[6px] bg-[#e6e6e6] rounded-[2px]" /></span> },
  { id: "teams", icon: <span className="w-[29px] h-[32px] rounded-full bg-[#6264a7] flex items-center justify-center"><Video size={16} fill="white" className="text-white" /></span> },
  { id: "files", icon: <Explorer />, dot: true },
  { id: "store", icon: <Store /> },
  { id: "l", icon: <span className="w-[30px] h-[30px] bg-[#1aa7d6] text-white font-bold text-[25px] leading-[30px] text-center">L</span> },
  { id: "vs", icon: <VsCode />, dot: true },
  { id: "opera", icon: <FaOpera size={30} className="text-[#e8132b]" />, dot: true },
  { id: "excel", icon: <Excel /> },
  { id: "yt", icon: <span className="w-[30px] h-[28px] rounded-[6px] bg-[#e8132b] flex items-center justify-center"><span className="w-0 h-0 border-y-[6px] border-y-transparent border-l-[10px] border-l-white" /></span> },
  { id: "fb", icon: <span className="w-[30px] h-[32px] rounded-full bg-[#1877f2] flex items-center justify-center"><FaFacebookF size={20} className="text-white" /></span> },
  { id: "discord", icon: <span className="w-[30px] h-[32px] rounded-full bg-[#5865f2] flex items-center justify-center"><FaDiscord size={20} className="text-white" /></span>, dot: true },
  { id: "gear", icon: <Gear />, dot: true },
  { id: "edge", icon: <FaEdge size={30} className="text-[#27a7d8]" />, dot: true },
  { id: "postman", icon: <Postman />, dot: true },
  { id: "git", icon: <GitLogo />, dot: true },
  { id: "snip", icon: <Snip />, active: true },
];

function Taskbar() {
  return (
    <div className="h-[60px] bg-[#1f1f1f] flex items-center text-white">
      <div className="w-[365px] shrink-0 flex items-center pl-[27px]">
        <span className="relative w-[30px] h-[36px] flex items-end">
          <span className="w-[24px] h-[24px] rounded-full bg-[#f5a623] mb-[8px]" />
          <span className="absolute left-0 bottom-[2px] w-[26px] h-[14px] rounded-full bg-[#bcd3ee]" />
          <span className="absolute left-[11px] -top-[3px] w-[20px] h-[20px] rounded-full bg-[#f28b9a] text-[#222] text-[12px] leading-[20px] text-center">1</span>
        </span>
        <div className="ml-[7px] text-[14px] leading-[21px]"><div>18°C</div><div className="text-[#ddd]">Eclaircies</div></div>
      </div>
      <span className="w-[29px] h-[30px] grid grid-cols-2 gap-px shrink-0">
        <span className="bg-[#6fd8f7]" /><span className="bg-[#50c6f2]" /><span className="bg-[#2fb0ef]" /><span className="bg-[#1a97e8]" />
      </span>
      <div className="ml-[18px] w-[273px] h-[40px] rounded-full bg-[#3a3a3a] flex items-center pl-[14px] shrink-0">
        <Search size={20} strokeWidth={1.6} className="text-[#eee]" />
        <span className="ml-[12px] text-[16px] text-[#ddd]">Rechercher</span>
        <span className="ml-auto mr-[9px] w-[26px] h-[28px] rounded-full bg-white flex items-center justify-center text-[#0a6fd0] font-bold text-[18px]">b</span>
      </div>
      <div className="ml-[3.500px] flex shrink-0">
        {taskApps.map((a) => (
          <div key={a.id} className="w-[55px] h-[60px] flex justify-center">
            <div className={`w-[50px] mt-[5px] h-[50px] rounded-[5px] flex flex-col items-center ${a.active ? "bg-[#333]" : ""}`}>
              <div className="h-[36px] mt-[5px] flex items-center justify-center">{a.icon}</div>
              {a.dot && <span className="w-[6px] h-[5px] mt-[2px] rounded-full bg-[#8a8a8a]" />}
              {a.active && <span className="w-[19px] h-[4px] mt-[2px] rounded-full bg-[#35d9f5]" />}
            </div>
          </div>
        ))}
      </div>
      <ChevronUp size={20} strokeWidth={2} className="ml-[25px]" />
      <span className="ml-[25px] text-[14px]">FRA</span>
      <Wifi size={20} strokeWidth={1.6} className="ml-[23px]" />
      <Volume2 size={20} strokeWidth={1.5} className="ml-[11px]" />
      <BatteryCharging size={21} strokeWidth={1.5} className="ml-[9px]" />
      <div className="ml-auto text-right text-[14px] leading-[23px] whitespace-nowrap"><div>01:11</div><div>28/05/2023</div></div>
      <Bell size={19} fill="white" className="ml-[12px] mr-[24px] text-white" />
    </div>
  );
}

export default function App() {
  return (
    <div className="w-[1920px] h-[1080px] overflow-hidden flex flex-col font-['Open_Sans',sans-serif]">
      <div className="h-[1020px] flex shrink-0">
        <Sidebar />
        <div className="flex-1 min-w-0 flex flex-col">
          <TopStrip />
          <AddressBar />
          <Bookmarks />
          <WordBar />
          <Ribbon />
          <DocArea />
          <StatusBar />
        </div>
      </div>
      <Taskbar />
    </div>
  );
}
